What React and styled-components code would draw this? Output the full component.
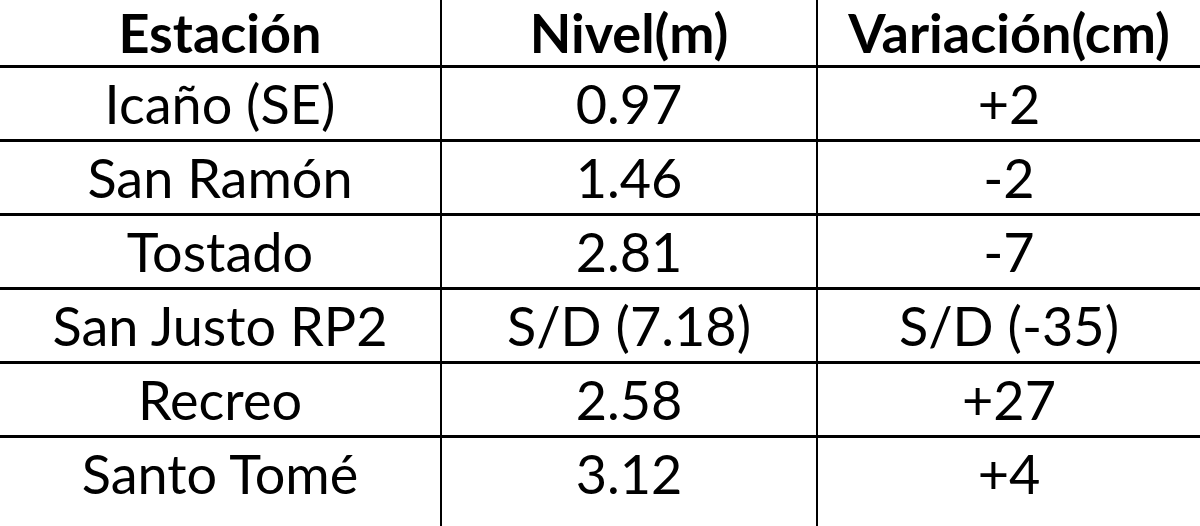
import React from "react";
import styled, { createGlobalStyle } from "styled-components";

const GlobalStyle = createGlobalStyle`
  html, body {
    margin: 0;
    padding: 0;
    background: #ffffff;
  }
  body {
    width: 1200px;
    height: 526px;
    overflow: hidden;
    font-family: Lato, "Open Sans", "Liberation Sans", sans-serif;
    color: #000000;
  }
`;

const Table = styled.div`
  display: grid;
  grid-template-columns: 442px 376px 382px;
  width: 1200px;
`;

const Cell = styled.div`
  display: flex;
  align-items: center;
  justify-content: center;
  height: ${props => (props.$head ? "65px" : "71px")};
  padding-bottom: ${props => (props.$last ? "17px" : "0")};
  border-bottom: ${props => (props.$last ? "none" : "3px solid #000")};
  border-right: ${props => (props.$edge ? "none" : "2px solid #000")};
  font-size: 54px;
  font-weight: ${props => (props.$head ? 700 : 400)};
  line-height: 1;
  white-space: nowrap;
  box-sizing: content-box;
`;

const head = ["Estación", "Nivel(m)", "Variación(cm)"];

const rows = [
  ["Icaño (SE)", "0.97", "+2"],
  ["San Ramón", "1.46", "-2"],
  ["Tostado", "2.81", "-7"],
  ["San Justo RP2", "S/D (7.18)", "S/D (-35)"],
  ["Recreo", "2.58", "+27"],
  ["Santo Tomé", "3.12", "+4"],
];

const App = () => {
  return (
    <>
      <GlobalStyle />
      <Table>
        {head.map((h, i) => (
          <Cell key={h} $head $edge={i === 2}>
            {h}
          </Cell>
        ))}
        {rows.map((r, ri) =>
          r.map((c, ci) => (
            <Cell key={ri + "-" + ci} $edge={ci === 2} $last={ri === rows.length - 1}>
              {c}
            </Cell>
          ))
        )}
      </Table>
    </>
  );
};

export default App;
